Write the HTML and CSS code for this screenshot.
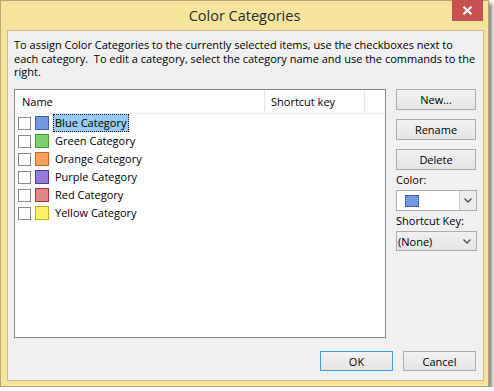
FILE: index.html
```html
<!DOCTYPE html>
<html>
<head>
<meta charset="utf-8">
<link rel="stylesheet" href="styles.css">
</head>
<body>
<div class="window">
  <div class="titlebar">
    <div class="title">Color Categories</div>
    <div class="close"><svg width="11" height="9" viewBox="0 0 11 9"><path d="M1.5 0.8L9.5 8.2M9.5 0.8L1.5 8.2" stroke="#fff" stroke-width="2.2"/></svg></div>
  </div>
  <div class="client">
    <p class="intro">To assign Color Categories to the currently selected items, use the checkboxes next to<br>each category.&nbsp; To edit a category, select the category name and use the commands to the<br>right.</p>
    <div class="main">
      <div class="list">
        <div class="list-head">
          <div class="col col-name">Name</div>
          <div class="col col-key">Shortcut key</div>
          <div class="col col-rest"></div>
        </div>
        <div class="row"><span class="check"></span><span class="swatch blue"></span><span class="label selected">Blue Category</span></div>
        <div class="row"><span class="check"></span><span class="swatch green"></span><span class="label">Green Category</span></div>
        <div class="row"><span class="check"></span><span class="swatch orange"></span><span class="label">Orange Category</span></div>
        <div class="row"><span class="check"></span><span class="swatch purple"></span><span class="label">Purple Category</span></div>
        <div class="row"><span class="check"></span><span class="swatch red"></span><span class="label">Red Category</span></div>
        <div class="row"><span class="check"></span><span class="swatch yellow"></span><span class="label">Yellow Category</span></div>
      </div>
      <div class="side">
        <div class="btn side-btn">New...</div>
        <div class="btn side-btn">Rename</div>
        <div class="btn side-btn">Delete</div>
        <div class="field-label">Color:</div>
        <div class="combo color-combo">
          <span class="combo-value"><span class="swatch blue small"></span></span>
          <span class="drop"><svg width="8" height="5" viewBox="0 0 8 5"><path d="M0.5 0.5L4 4L7.5 0.5" fill="none" stroke="#505050" stroke-width="1.4"/></svg></span>
        </div>
        <div class="field-label">Shortcut Key:</div>
        <div class="combo key-combo">
          <span class="combo-value">(None)</span>
          <span class="arrow"><svg width="8" height="5" viewBox="0 0 8 5"><path d="M0.5 0.5L4 4L7.5 0.5" fill="none" stroke="#505050" stroke-width="1.4"/></svg></span>
        </div>
      </div>
    </div>
    <div class="footer">
      <div class="btn foot-btn ok">OK</div>
      <div class="btn foot-btn">Cancel</div>
    </div>
  </div>
</div>
</body>
</html>
```
FILE: styles.css
```css
* { box-sizing: border-box; }
html, body { margin: 0; padding: 0; background: #ffffff; }
body { font-family: "Open Sans", "Noto Sans", sans-serif; font-size: 11px; color: #000; }

.window {
  width: 489px;
  height: 387px;
  background: #f7e39c;
  border: 1px solid #b9a873;
  box-shadow: 3px 3px 4px rgba(0,0,0,0.5);
  display: flex;
  flex-direction: column;
}

.titlebar {
  height: 29px;
  display: flex;
  align-items: flex-start;
  padding-left: 36px;
  padding-right: 5px;
}
.title {
  flex: 1;
  text-align: center;
  font-size: 14.5px;
  line-height: 29px;
  color: #2b2b2b;
}
.close {
  width: 31px;
  height: 21px;
  margin-top: -1px;
  background: #c75050;
  display: flex;
  align-items: center;
  justify-content: center;
}

.client {
  margin: 0 4px 0 6px;
  height: 351px;
  border: 1px solid #cbbd8e;
  background: #f0f0f0;
  padding: 7px 6px 9px 6px;
  display: flex;
  flex-direction: column;
}

.intro {
  margin: 0 0 10.5px 0;
  line-height: 13.5px;
  white-space: nowrap;
}

.main {
  display: flex;
  gap: 10px;
  height: 249px;
}

.list {
  width: 372px;
  border: 1px solid #828790;
  background: #fff;
}
.list-head {
  display: flex;
  height: 24px;
  border-bottom: 1px solid #e8eef6;
}
.col { line-height: 23px; }
.col-name { width: 250px; padding-left: 7px; border-right: 1px solid #e5e5e5; }
.col-key { width: 100px; padding-left: 6px; border-right: 1px solid #e5e5e5; }
.col-rest { flex: 1; }

.row {
  display: flex;
  align-items: center;
  height: 18px;
  padding-left: 3px;
}
.check {
  width: 13px;
  height: 13px;
  border: 1px solid #8a8a8a;
  background: #fff;
  margin-right: 4px;
}
.swatch {
  width: 14px;
  height: 14px;
  border: 1px solid;
  margin-right: 4px;
}
.swatch.small { width: 14px; height: 12px; margin: 0; }
.blue { background: #7299e0; border-color: #3c62b8; }
.green { background: #7ccf6e; border-color: #3f9b38; }
.orange { background: #f3a25e; border-color: #c4652c; }
.purple { background: #967bd6; border-color: #5a3aa6; }
.red { background: #de8888; border-color: #b33232; }
.yellow { background: #fbf263; border-color: #bfae1e; }

.label {
  height: 18px;
  line-height: 15px;
  padding: 0 2px 0 1px;
  border: 1px dotted transparent;
}
.label.selected {
  background: #99c9ef;
  border-color: #1a1a1a;
}

.side {
  width: 81px;
  display: flex;
  flex-direction: column;
}
.btn {
  display: flex;
  align-items: center;
  justify-content: center;
  background: linear-gradient(#f2f2f2, #e4e4e4);
  border: 1px solid #adadad;
}
.side-btn { height: 21px; width: 80px; margin-bottom: 9px; }
.side-btn:nth-child(3) { margin-bottom: 0; }
.field-label { height: 20px; line-height: 20px; }

.combo {
  display: flex;
  align-items: stretch;
  border: 1px solid #abadb3;
}
.color-combo { height: 21px; background: #fff; }
.color-combo .combo-value { flex: 1; display: flex; align-items: center; padding-left: 8px; }
.drop {
  width: 17px;
  border-left: 1px solid #c8c8c8;
  background: #ececec;
  display: flex;
  align-items: center;
  justify-content: center;
}
.key-combo {
  height: 20px;
  background: linear-gradient(#f0f0f0, #e5e5e5);
  border-color: #acacac;
  align-items: center;
}
.key-combo .combo-value { flex: 1; padding-left: 1px; }
.arrow { width: 18px; display: flex; justify-content: center; }

.footer {
  margin-top: 13px;
  display: flex;
  justify-content: flex-end;
  gap: 10px;
  padding-right: 1px;
}
.foot-btn { width: 73px; height: 20px; }
.ok { border-color: #3c9ce8; }
```
